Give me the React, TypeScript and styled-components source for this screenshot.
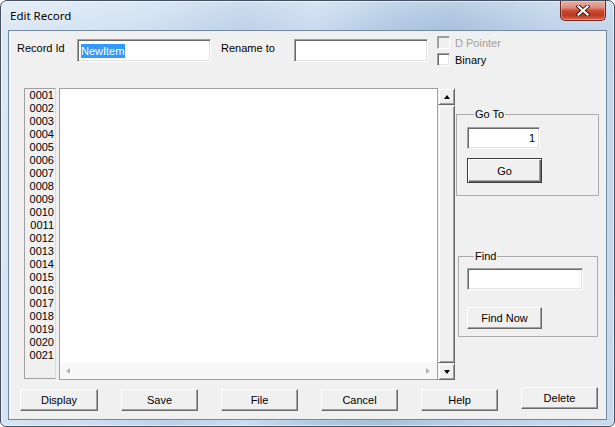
import React from "react";
import styled, { createGlobalStyle, css } from "styled-components";

const Global = createGlobalStyle`
  html, body { margin: 0; padding: 0; background: #ffffff; }
  body { width: 615px; height: 427px; overflow: hidden; }
`;

const Window = styled.div`
  box-sizing: border-box;
  width: 615px;
  height: 427px;
  border: 1px solid #44505f;
  border-radius: 7px 7px 6px 6px;
  box-shadow: inset 0 0 0 1px rgba(255, 255, 255, 0.55);
  background:
    linear-gradient(180deg, rgba(255,255,255,0.25) 0px, rgba(255,255,255,0) 30px),
    linear-gradient(100deg, #dce8f5 0%, #cfdff0 22%, #bcd1e9 36%, #cadcef 46%, #aec7e2 58%, #a7c0dc 66%, #bdd2ea 80%, #c9daee 100%);
  display: flex;
  flex-direction: column;
  padding: 0 7px 6px 7px;
  overflow: hidden;
  font-family: "Liberation Sans", Arial, sans-serif;
  font-size: 11px;
  color: #000;
`;

const TitleBar = styled.div`
  height: 29px;
  display: flex;
  justify-content: space-between;
  align-items: flex-start;
`;

const Title = styled.div`
  font-family: "Noto Sans", "Open Sans", sans-serif;
  font-size: 11.5px;
  padding: 7px 0 0 2px;
  color: #000;
  text-shadow: 0 0 6px rgba(255, 255, 255, 0.9);
`;

const CloseButton = styled.div`
  box-sizing: border-box;
  width: 46px;
  height: 20px;
  margin-right: 1px;
  border: 1px solid #6a261c;
  border-top: none;
  border-radius: 0 0 5px 5px;
  background: linear-gradient(180deg, #e8b2a6 0%, #dc8d7c 35%, #c6472f 52%, #bd3a22 75%, #d5664c 100%);
  box-shadow: inset 0 0 0 1px rgba(255, 210, 200, 0.45);
  display: flex;
  align-items: center;
  justify-content: center;
`;

const Client = styled.div`
  flex: 1;
  min-height: 0;
  background: #f0f0f0;
  border: 1px solid #73879e;
  display: flex;
  flex-direction: column;
`;

const TopRow = styled.div`
  display: flex;
  align-items: flex-start;
  padding: 5px 0 0 8px;
  height: 29px;
`;

const FieldLabel = styled.div<{ $w: number }>`
  width: ${(p) => p.$w}px;
  margin-top: 4px;
  line-height: 17px;
  white-space: nowrap;
`;

const sunken = css`
  box-sizing: border-box;
  background: #ffffff;
  border: 1px solid;
  border-color: #a0a0a0 #ffffff #ffffff #a0a0a0;
  box-shadow: inset 1px 1px 0 #696969, inset -1px -1px 0 #e3e3e3;
`;

const TextField = styled.div<{ $w: number; $h: number; $mt?: number; $right?: boolean }>`
  ${sunken};
  width: ${(p) => p.$w}px;
  height: ${(p) => p.$h}px;
  margin-top: ${(p) => p.$mt ?? 0}px;
  padding: 0 4px 0 3px;
  display: flex;
  align-items: center;
  justify-content: ${(p) => (p.$right ? "flex-end" : "flex-start")};
  line-height: 14px;
`;

const Selected = styled.span`
  background: #3399ff;
  color: #ffffff;
  padding: 0 1px 0 0;
`;

const CheckColumn = styled.div`
  margin-left: 9px;
  display: flex;
  flex-direction: column;
  gap: 4px;
`;

const CheckRow = styled.div<{ $disabled?: boolean }>`
  display: flex;
  align-items: center;
  gap: 5px;
  height: 13px;
  color: ${(p) => (p.$disabled ? "#a0a0a0" : "#000000")};
`;

const CheckBox = styled.div<{ $disabled?: boolean }>`
  ${sunken};
  width: 13px;
  height: 13px;
  background: ${(p) => (p.$disabled ? "#f0f0f0" : "#ffffff")};
  ${(p) =>
    p.$disabled &&
    css`
      box-shadow: inset 1px 1px 0 #a0a0a0, inset -1px -1px 0 #f0f0f0;
    `}
`;

const MiddleRow = styled.div`
  display: flex;
  margin-top: 23px;
  padding-left: 15px;
  height: 292px;
`;

const LinePanel = styled.div`
  box-sizing: border-box;
  width: 32px;
  height: 291px;
  border: 1px solid #a0a0a0;
  border-right-color: #dcdcdc;
  background: #f0f0f0;
  text-align: right;
  padding-right: 1px;
  line-height: 13px;
`;

const Editor = styled.div`
  box-sizing: border-box;
  margin-left: 3px;
  width: 379px;
  border: 1px solid #a0a0a0;
  display: flex;
  flex-direction: column;
  background: #ffffff;
`;

const EditArea = styled.div`
  flex: 1;
  background: #ffffff;
`;

const HScroll = styled.div`
  height: 16px;
  background: #f7f7f7;
  display: flex;
  align-items: center;
  justify-content: space-between;
  padding: 0 7px 0 6px;
`;

const Arrow = styled.span<{ $dir: "up" | "down" | "left" | "right"; $disabled?: boolean }>`
  width: 0;
  height: 0;
  border-style: solid;
  ${(p) => {
    const c = p.$disabled ? "#b4b4b4" : "#000000";
    switch (p.$dir) {
      case "up":
        return css`border-width: 0 3.5px 4px 3.5px; border-color: transparent transparent ${c} transparent;`;
      case "down":
        return css`border-width: 4px 3.5px 0 3.5px; border-color: ${c} transparent transparent transparent;`;
      case "left":
        return css`border-width: 3.5px 4px 3.5px 0; border-color: transparent ${c} transparent transparent;`;
      default:
        return css`border-width: 3.5px 0 3.5px 4px; border-color: transparent transparent transparent ${c};`;
    }
  }}
  ${(p) => p.$disabled && css`filter: drop-shadow(1px 1px 0 #ffffff);`}
`;

const VScroll = styled.div`
  width: 17px;
  display: flex;
  flex-direction: column;
  background: #f0f0f0;
`;

const raised = css`
  box-sizing: border-box;
  background: #f0f0f0;
  border: 1px solid;
  border-color: #f0f0f0 #696969 #696969 #f0f0f0;
  box-shadow: inset 1px 1px 0 #ffffff, inset -1px -1px 0 #a0a0a0;
`;

const ScrollButton = styled.div`
  ${raised};
  height: 17px;
  display: flex;
  align-items: center;
  justify-content: center;
`;

const ScrollThumb = styled.div`
  ${raised};
  flex: 1;
`;

const RightColumn = styled.div`
  margin-left: 1px;
  width: 143px;
  display: flex;
  flex-direction: column;
  align-items: flex-start;
`;

const Group = styled.fieldset<{ $mt: number; $ml: number; $w: number; $pt: number; $pb: number; $pl: number }>`
  box-sizing: border-box;
  min-width: 0;
  margin: ${(p) => p.$mt}px 0 0 ${(p) => p.$ml}px;
  width: ${(p) => p.$w}px;
  border: 1px solid #ababab;
  padding: ${(p) => p.$pt}px 0 ${(p) => p.$pb}px ${(p) => p.$pl}px;
  display: flex;
  flex-direction: column;
  align-items: flex-start;
`;

const Legend = styled.legend`
  margin-left: 7px;
  padding: 0 1px;
  line-height: 13px;
  font-size: 11px;
`;

const PushButton = styled.div<{ $w: number; $h: number; $mt?: number; $default?: boolean }>`
  ${raised};
  width: ${(p) => p.$w}px;
  height: ${(p) => p.$h}px;
  margin-top: ${(p) => p.$mt ?? 0}px;
  display: flex;
  align-items: center;
  justify-content: center;
  border-color: #ffffff #696969 #696969 #ffffff;
  box-shadow: inset -1px -1px 0 #a0a0a0;
  ${(p) =>
    p.$default &&
    css`
      border-color: #3c3c3c;
      box-shadow: inset 1px 1px 0 #ffffff, inset -1px -1px 0 #696969, inset -2px -2px 0 #a0a0a0;
    `}
`;

const BottomRow = styled.div`
  display: flex;
  justify-content: space-between;
  align-items: flex-start;
  margin-top: 9px;
  padding: 0 8px 0 11px;
`;

const BottomButton = styled(PushButton)<{ $lift?: boolean }>`
  margin-top: ${(p) => (p.$lift ? -2 : 0)}px;
`;

const lineNumbers = Array.from({ length: 21 }, (_, i) => String(i + 1).padStart(4, "0"));

const CloseGlyph = () => (
  <svg width="14" height="11" viewBox="0 0 14 11">
    <path d="M2.5 1.5 L11.5 9.5 M11.5 1.5 L2.5 9.5" stroke="#4a1a12" strokeWidth="4.2" strokeLinecap="square" fill="none" />
    <path d="M2.5 1.5 L11.5 9.5 M11.5 1.5 L2.5 9.5" stroke="#ffffff" strokeWidth="2.2" strokeLinecap="square" fill="none" />
  </svg>
);

export default function App() {
  return (
    <>
      <Global />
      <Window>
        <TitleBar>
          <Title>Edit Record</Title>
          <CloseButton>
            <CloseGlyph />
          </CloseButton>
        </TitleBar>
        <Client>
          <TopRow>
            <FieldLabel $w={60}>Record Id</FieldLabel>
            <TextField $w={134} $h={23} $mt={3}>
              <Selected>NewItem</Selected>
            </TextField>
            <FieldLabel $w={73} style={{ marginLeft: 10 }}>Rename to</FieldLabel>
            <TextField $w={134} $h={23} $mt={3} />
            <CheckColumn>
              <CheckRow $disabled>
                <CheckBox $disabled />
                D Pointer
              </CheckRow>
              <CheckRow>
                <CheckBox />
                Binary
              </CheckRow>
            </CheckColumn>
          </TopRow>
          <MiddleRow>
            <LinePanel>
              {lineNumbers.map((n) => (
                <div key={n}>{n}</div>
              ))}
            </LinePanel>
            <Editor>
              <EditArea />
              <HScroll>
                <Arrow $dir="left" $disabled />
                <Arrow $dir="right" $disabled />
              </HScroll>
            </Editor>
            <VScroll>
              <ScrollButton>
                <Arrow $dir="up" />
              </ScrollButton>
              <ScrollThumb />
              <ScrollButton>
                <Arrow $dir="down" />
              </ScrollButton>
            </VScroll>
            <RightColumn>
              <Group $mt={20} $ml={0} $w={143} $pt={6} $pb={12} $pl={10}>
                <Legend>Go To</Legend>
                <TextField $w={73} $h={22} $right>1</TextField>
                <PushButton $w={75} $h={25} $mt={9} $default>Go</PushButton>
              </Group>
              <Group $mt={54} $ml={2} $w={140} $pt={5} $pb={7} $pl={8}>
                <Legend>Find</Legend>
                <TextField $w={116} $h={22} />
                <PushButton $w={75} $h={22} $mt={17}>Find Now</PushButton>
              </Group>
            </RightColumn>
          </MiddleRow>
          <BottomRow>
            <BottomButton $w={78} $h={22}>Display</BottomButton>
            <BottomButton $w={77} $h={22}>Save</BottomButton>
            <BottomButton $w={77} $h={22}>File</BottomButton>
            <BottomButton $w={77} $h={22}>Cancel</BottomButton>
            <BottomButton $w={77} $h={22}>Help</BottomButton>
            <BottomButton $w={77} $h={22} $lift>Delete</BottomButton>
          </BottomRow>
        </Client>
      </Window>
    </>
  );
}
